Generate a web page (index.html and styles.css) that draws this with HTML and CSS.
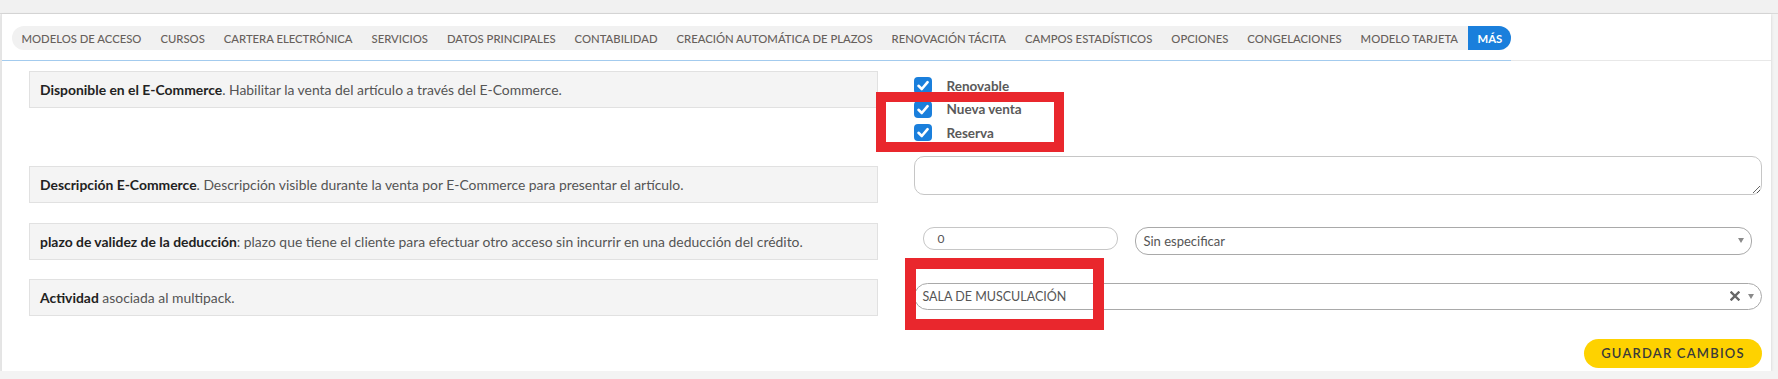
FILE: index.html
```html
<!doctype html>
<html>
  <head>
    <meta charset="utf-8">
    <title>Artículo - Más</title>
    <link rel="stylesheet" href="styles.css">
  </head>
  <body>
    <div class='topbar'></div>

    <div class='panel'>
      <div class='tab-strip'>
        <div class='tab-track'>
          <nav class='tabs'>
            <a class='tab' href='#'>Modelos de acceso</a>
            <a class='tab' href='#'>Cursos</a>
            <a class='tab' href='#'>Cartera electrónica</a>
            <a class='tab' href='#'>Servicios</a>
            <a class='tab' href='#'>Datos principales</a>
            <a class='tab' href='#'>Contabilidad</a>
            <a class='tab' href='#'>Creación automática de plazos</a>
            <a class='tab' href='#'>Renovación tácita</a>
            <a class='tab' href='#'>Campos estadísticos</a>
            <a class='tab' href='#'>Opciones</a>
            <a class='tab' href='#'>Congelaciones</a>
            <a class='tab' href='#'>Modelo tarjeta</a>
            <a class='tab tab-active' href='#'>Más</a>
          </nav>
        </div>
        <div class='tab-rest'></div>
      </div>

      <form class='form'>
        <div class='row row-ecommerce'>
          <div class='label-box'>
            <b>Disponible en el E-Commerce</b>. Habilitar la venta del artículo a través del E-Commerce.
          </div>
          <div class='checks'>
            <label class='check'>
              <span class='check-box'>
                <svg viewBox='0 0 18 17' width='18' height='17'><path d='M4.5 8.8 L7.8 12 L13.6 5.2' fill='none' stroke='#fff' stroke-width='2.6' stroke-linecap='round' stroke-linejoin='round'/></svg>
              </span>
              Renovable
            </label>
            <label class='check'>
              <span class='check-box'>
                <svg viewBox='0 0 18 17' width='18' height='17'><path d='M4.5 8.8 L7.8 12 L13.6 5.2' fill='none' stroke='#fff' stroke-width='2.6' stroke-linecap='round' stroke-linejoin='round'/></svg>
              </span>
              Nueva venta
            </label>
            <label class='check'>
              <span class='check-box'>
                <svg viewBox='0 0 18 17' width='18' height='17'><path d='M4.5 8.8 L7.8 12 L13.6 5.2' fill='none' stroke='#fff' stroke-width='2.6' stroke-linecap='round' stroke-linejoin='round'/></svg>
              </span>
              Reserva
            </label>
            <div class='mark mark-checks'></div>
          </div>
        </div>

        <div class='row row-desc'>
          <div class='label-box'>
            <b>Descripción E-Commerce</b>. Descripción visible durante la venta por E-Commerce para presentar el artículo.
          </div>
          <textarea class='textarea'></textarea>
        </div>

        <div class='row row-plazo'>
          <div class='label-box'>
            <b>plazo de validez de la deducción</b>: plazo que tiene el cliente para efectuar otro acceso sin incurrir en una deducción del crédito.
          </div>
          <div class='plazo-controls'>
            <div class='input-small'>0</div>
            <div class='select'>
              <span class='select-text'>Sin especificar</span>
              <span class='caret'></span>
            </div>
          </div>
        </div>

        <div class='row row-actividad'>
          <div class='label-box'>
            <b>Actividad</b> asociada al multipack.
          </div>
          <div class='select select-activity'>
            <span class='select-text select-upper'>SALA DE MUSCULACIÓN</span>
            <svg class='clear' viewBox='0 0 10 10' width='10' height='10'><path d='M1.5 1.5 L8.5 8.5 M8.5 1.5 L1.5 8.5' stroke='#666' stroke-width='2.4' stroke-linecap='square'/></svg>
            <span class='caret'></span>
            <div class='mark mark-activity'></div>
          </div>
        </div>

        <div class='actions'>
          <button class='save' type='button'>Guardar cambios</button>
        </div>
      </form>
    </div>
  </body>
</html>
```

FILE: styles.css
```css
:root {
  --text-color: #555;
  --strong-color: #222;
  --blue: #1a7fdc;
  --box-bg: #f4f4f4;
  --box-border: #e1e1e1;
  --field-border: #c6c6c6;
  --mark-red: #e9272d;
}

body {
  margin: 0;
  background: #f3f3f3;
  font-family: Lato, "Open Sans", sans-serif;
  color: var(--text-color);
}

.topbar {
  height: 13px;
  background: #f1f1f1;
  border-bottom: 1px solid #dadada;
}

.panel {
  margin: 0 7px 0 1px;
  padding: 12px 0 3px 0;
  background: #fff;
  border-left: 1px solid #e4e4e4;
  box-shadow: 0 1px 3px rgba(0, 0, 0, 0.15);
}

.tab-strip {
  display: flex;
}

.tab-track {
  padding: 0 0 10px 10px;
  border-bottom: 1px solid #a3cbee;
}

.tab-rest {
  flex: 1;
  border-bottom: 1px solid #e8e8e8;
}

.tabs {
  display: flex;
  height: 24px;
  background: #f1f1f1;
  border-radius: 12px;
}

.tab {
  display: flex;
  align-items: center;
  padding: 0 9.5px;
  font-size: 11.3px;
  font-weight: 500;
  text-transform: uppercase;
  color: #66605b;
  text-decoration: none;
  white-space: nowrap;
}

.tab-active {
  padding: 0 9px 0 10px;
  background: var(--blue);
  color: #fff;
  font-weight: bold;
  border-radius: 0 12px 12px 0;
}

.form {
  padding: 0 9px 0 27px;
}

.row {
  display: grid;
  grid-template-columns: 1fr 1fr;
  column-gap: 36px;
  align-items: start;
}

.row-ecommerce {
  margin-top: 10px;
}

.row-desc {
  margin-top: 11px;
}

.row-plazo {
  margin-top: 20px;
}

.row-actividad {
  margin-top: 19px;
}

.label-box {
  height: 35px;
  line-height: 35px;
  padding-left: 10px;
  background: var(--box-bg);
  border: 1px solid var(--box-border);
  font-size: 13.9px;
  white-space: nowrap;
  overflow: hidden;
}

.label-box b {
  color: var(--strong-color);
}

.row-desc .label-box {
  margin-top: 10px;
}

.checks {
  position: relative;
  display: flex;
  flex-direction: column;
  margin-top: 3px;
}

.check {
  display: flex;
  align-items: center;
  gap: 15px;
  height: 23.5px;
  font-size: 13.5px;
  font-weight: bold;
  color: #5a5a5a;
}

.check-box {
  display: flex;
  width: 18px;
  height: 17px;
  background: var(--blue);
  border-radius: 4px;
}

.mark {
  position: absolute;
  border: 10px solid var(--mark-red);
  pointer-events: none;
}

.mark-checks {
  left: -38px;
  top: 18px;
  width: 168px;
  height: 40px;
}

.textarea {
  display: block;
  box-sizing: border-box;
  width: 100%;
  height: 39px;
  margin: 0;
  border: 1px solid var(--field-border);
  border-radius: 10px;
  resize: vertical;
  font: inherit;
}

.plazo-controls {
  display: flex;
  gap: 17px;
  padding-left: 9px;
  padding-right: 10px;
}

.input-small {
  box-sizing: border-box;
  display: flex;
  align-items: center;
  width: 195px;
  height: 23px;
  margin-top: 4px;
  padding-left: 14px;
  border: 1px solid var(--field-border);
  border-radius: 11px;
  font-size: 12px;
}

.select {
  position: relative;
  box-sizing: border-box;
  flex: 1;
  display: flex;
  align-items: center;
  height: 28px;
  margin-top: 4px;
  padding: 0 7px 0 8px;
  border: 1px solid #a9a9a9;
  border-radius: 13px;
  font-size: 13px;
}

.select-text {
  flex: 1;
}

.select-upper {
  font-size: 12.5px;
}

.select-activity {
  height: 27px;
  margin-top: 4px;
  border-radius: 14px;
}

.clear {
  margin-right: 8px;
}

.caret {
  width: 0;
  height: 0;
  border-left: 3px solid transparent;
  border-right: 3px solid transparent;
  border-top: 5px solid #8a8a8a;
}

.mark-activity {
  left: -10px;
  top: -26px;
  width: 177px;
  height: 50px;
  border-width: 11px;
}

.actions {
  display: flex;
  justify-content: flex-end;
  margin-top: 23px;
}

.save {
  width: 178px;
  height: 29px;
  border: 0;
  border-radius: 15px;
  background: #fed200;
  color: #3a3a3a;
  font-family: inherit;
  font-size: 13px;
  font-weight: 600;
  letter-spacing: 1.2px;
  text-transform: uppercase;
}
```
